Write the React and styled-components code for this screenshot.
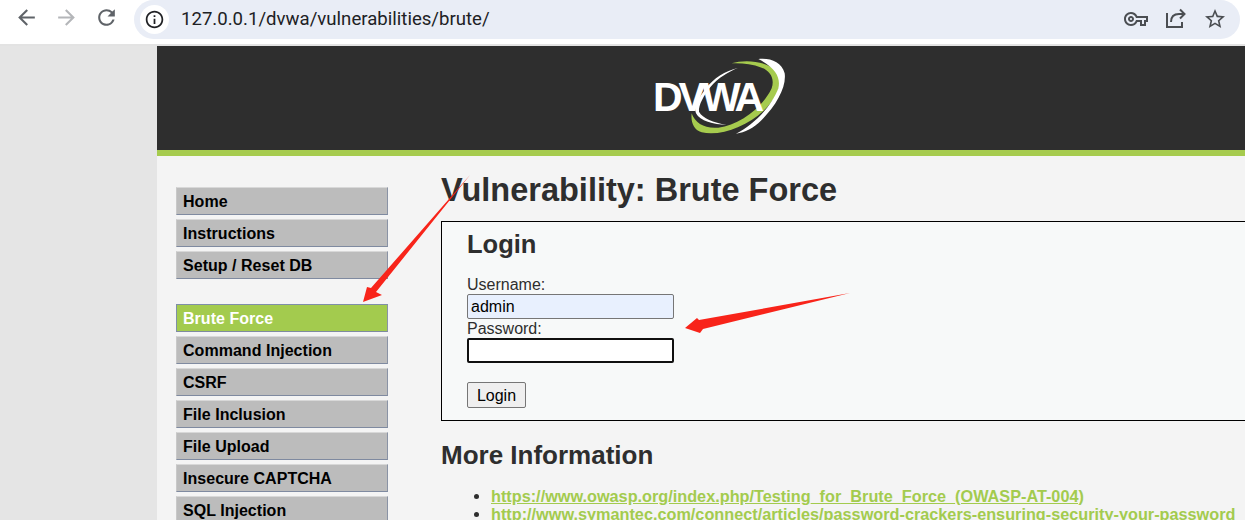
import React from 'react'
import styled, { createGlobalStyle } from 'styled-components'
import { MdArrowBack, MdArrowForward, MdRefresh, MdInfoOutline, MdOutlineVpnKey, MdStarBorder } from 'react-icons/md'

const GlobalStyle = createGlobalStyle`
  html, body {
    margin: 0;
    height: 520px;
    overflow: hidden;
    background: #fff;
    font-family: "Liberation Sans", Arial, sans-serif;
  }
`

const Browser = styled.div`
  position: relative;
  width: 1245px;
  height: 520px;
  overflow: hidden;
`

const Toolbar = styled.div`
  height: 44px;
  display: flex;
  align-items: flex-start;
  background: #fff;
  border-bottom: 2px solid #e3e3e3;
`

const NavIcons = styled.div`
  width: 134px;
  height: 39px;
  display: flex;
  align-items: center;
  padding: 0 0 4px 14px;
  gap: 15px;
  box-sizing: border-box;
`

const NavIcon = styled.span`
  display: flex;
  font-size: 25px;
  color: ${p => (p.$dim ? '#b4b6b9' : '#5f6368')};
`

const Omnibox = styled.div`
  flex: 1;
  height: 39px;
  margin-right: 5px;
  background: #e9edf6;
  border-radius: 20px;
  display: flex;
  align-items: center;
  padding: 0 13px 0 6px;
`

const InfoBadge = styled.span`
  width: 29px;
  height: 29px;
  border-radius: 50%;
  background: #fff;
  display: flex;
  align-items: center;
  justify-content: center;
  font-size: 21px;
  color: #202124;
  margin-right: 12px;
`

const Url = styled.span`
  flex: 1;
  padding-bottom: 2px;
  font-family: "Roboto", "Liberation Sans", sans-serif;
  font-size: 18.6px;
  color: #202124;
`

const Actions = styled.div`
  display: flex;
  align-items: center;
  gap: 16px;
  color: #4b4e52;
  font-size: 24px;
  padding-bottom: 2px;
`

const ActionIcon = styled.span`
  display: flex;
`

const Shell = styled.div`
  height: 474px;
  display: flex;
  background: #e5e5e5;
`

const Page = styled.div`
  margin-left: 157px;
  flex: 1;
  background: #f4f4f4;
  overflow: hidden;
`

const Header = styled.header`
  height: 104px;
  background: #2e2e2e;
  border-bottom: 6px solid #a6cb4e;
  display: flex;
  align-items: center;
  justify-content: center;
`

const Logo = styled.div`
  position: relative;
  width: 180px;
  height: 104px;
  margin-left: 38px;
`

const LogoText = styled.span`
  position: absolute;
  left: 23px;
  top: 26px;
  font-size: 41px;
  line-height: 50px;
  font-weight: 700;
  letter-spacing: -4px;
  color: #fff;
`

const Swoosh = styled.svg`
  position: absolute;
  inset: 0;
`

const Columns = styled.div`
  display: flex;
  padding: 16px 0 0 19px;
`

const Menu = styled.nav`
  width: 212px;
  flex: none;
  margin: 15px 53px 0 0;
`

const MenuBlock = styled.ul`
  list-style: none;
  margin: 0 0 25px;
  padding: 0;
`

const MenuItem = styled.li`
  height: 24px;
  margin-bottom: 4px;
  padding: 2px 0 0 6px;
  display: flex;
  align-items: center;
  font-size: 16px;
  letter-spacing: 0.03px;
  font-weight: 700;
  color: ${p => (p.$active ? '#fff' : '#000')};
  background: ${p => (p.$active ? '#a3cb4e' : '#bcbcbc')};
  border-top: 1px solid ${p => (p.$active ? '#7f8fa8' : '#d8d8d8')};
  border-bottom: 1px solid #7f8aa0;
  border-left: 1px solid ${p => (p.$active ? '#7f8fa8' : '#c8c8c8')};
  border-right: 1px solid #8a93a5;
`

const Body = styled.main`
  flex: 1;
  min-width: 0;
  color: #2e2e2e;
`

const Title = styled.h1`
  margin: 0 0 12px;
  font-size: 32.5px;
  line-height: 37px;
  font-weight: 700;
  white-space: nowrap;
`

const LoginBox = styled.div`
  width: 830px;
  height: 200px;
  box-sizing: border-box;
  border: 1px solid #000;
  background: #f7f9f9;
  padding: 8px 25px;
`

const BoxTitle = styled.h2`
  margin: 0 0 16px;
  font-size: 25.5px;
  line-height: 29px;
`

const Field = styled.label`
  display: block;
  font-size: 16px;
  line-height: 19px;
  color: #2e2e2e;
`

const TextInput = styled.input`
  display: block;
  width: 207px;
  height: 25px;
  box-sizing: border-box;
  padding: 0 3px;
  font: 16px "Liberation Sans", Arial, sans-serif;
  color: #000;
  border-radius: 2px;
  outline: none;
  background: ${p => (p.$focus ? '#fff' : '#e8f0fe')};
  border: ${p => (p.$focus ? '2px solid #101010' : '1px solid #767676')};
`

const LoginButton = styled.button`
  display: block;
  margin-top: 19px;
  width: 59px;
  height: 26px;
  padding: 1px 0 0;
  font: 16px "Liberation Sans", Arial, sans-serif;
  color: #000;
  background: #efefef;
  border: 1px solid #767676;
  border-radius: 2px;
`

const SectionTitle = styled.h2`
  margin: 19px 0 17px;
  font-size: 26px;
  line-height: 30px;
  white-space: nowrap;
`

const Links = styled.ul`
  margin: 0;
  padding-left: 50px;
  font-size: 16.25px;
  line-height: 18px;
  font-weight: 700;
  white-space: nowrap;

  a {
    color: #a3cb4e;
  }
`

const Arrows = styled.svg`
  position: absolute;
  left: 0;
  top: 0;
  pointer-events: none;
`

const menuGroups = [
  ['Home', 'Instructions', 'Setup / Reset DB'],
  ['Brute Force', 'Command Injection', 'CSRF', 'File Inclusion', 'File Upload', 'Insecure CAPTCHA', 'SQL Injection'],
]

const ShareIcon = () => (
  <svg width="23" height="23" viewBox="0 0 23 23" fill="none" stroke="currentColor" strokeWidth="2">
    <path d="M3 6v14h15v-5" />
    <path d="M7 15c0-5 3-8 8-8h5" />
    <path d="M16 2.5l4.5 4.5-4.5 4.5" />
  </svg>
)

const App = () => (
  <Browser>
    <GlobalStyle />
    <Toolbar>
      <NavIcons>
        <NavIcon><MdArrowBack /></NavIcon>
        <NavIcon $dim><MdArrowForward /></NavIcon>
        <NavIcon><MdRefresh /></NavIcon>
      </NavIcons>
      <Omnibox>
        <InfoBadge><MdInfoOutline /></InfoBadge>
        <Url>127.0.0.1/dvwa/vulnerabilities/brute/</Url>
        <Actions>
          <ActionIcon><MdOutlineVpnKey /></ActionIcon>
          <ActionIcon><ShareIcon /></ActionIcon>
          <ActionIcon><MdStarBorder /></ActionIcon>
        </Actions>
      </Omnibox>
    </Toolbar>
    <Shell>
      <Page>
        <Header>
          <Logo>
            <Swoosh width="180" height="104" viewBox="0 3 540 312">
              <path d="M305 55C345 42 410 48 440 78C465 110 440 160 400 198C350 245 270 275 215 262C190 255 182 230 185 205C195 235 225 252 265 248C330 240 400 185 425 130C435 100 420 78 395 68C365 56 335 54 305 55Z" fill="#a6cb4e" />
              <path d="M385 42C420 38 455 50 464 85C470 125 440 180 395 225C370 250 345 262 318 266C370 240 425 185 445 130C452 100 440 70 385 42Z" fill="#fff" />
              <path d="M325 68C285 78 250 100 228 130C205 160 190 185 198 205C210 228 250 238 290 240C250 232 218 220 207 200C205 180 222 150 242 125C265 98 295 80 325 68Z" fill="#fff" />
            </Swoosh>
            <LogoText>DVWA</LogoText>
          </Logo>
        </Header>
        <Columns>
          <Menu>
            {menuGroups.map((group, i) => (
              <MenuBlock key={i}>
                {group.map(name => (
                  <MenuItem key={name} $active={name === 'Brute Force'}>{name}</MenuItem>
                ))}
              </MenuBlock>
            ))}
          </Menu>
          <Body>
            <Title>Vulnerability: Brute Force</Title>
            <LoginBox>
              <BoxTitle>Login</BoxTitle>
              <Field>Username:<TextInput defaultValue="admin" /></Field>
              <Field>Password:<TextInput $focus type="password" /></Field>
              <LoginButton>Login</LoginButton>
            </LoginBox>
            <SectionTitle>More Information</SectionTitle>
            <Links>
              <li><a href="#a">https://www.owasp.org/index.php/Testing_for_Brute_Force_(OWASP-AT-004)</a></li>
              <li><a href="#b">http://www.symantec.com/connect/articles/password-crackers-ensuring-security-your-password</a></li>
            </Links>
          </Body>
        </Columns>
      </Page>
    </Shell>
    <Arrows width="1245" height="520" viewBox="0 0 1245 520">
      <polygon points="470,175 376,292 382,295 363,302 367,287 371,288" fill="#f8241a" />
      <polygon points="850,293 703,329 700,333 685,328 697,318 699,320" fill="#f8241a" />
    </Arrows>
  </Browser>
)

export default App
